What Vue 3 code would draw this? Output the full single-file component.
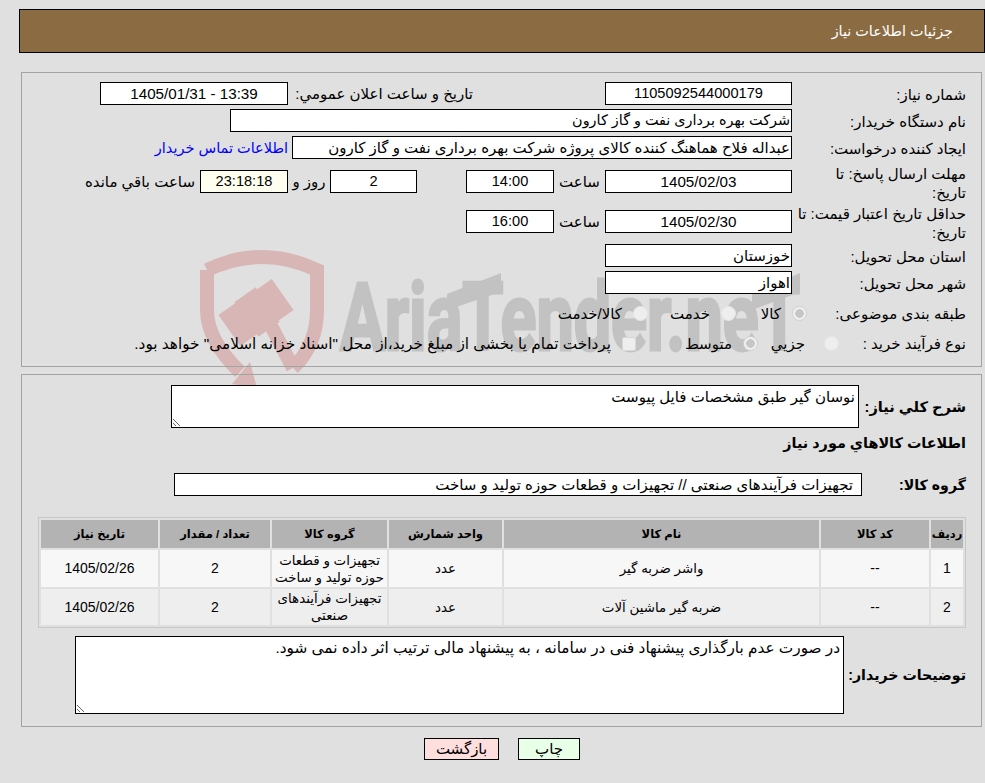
<script setup>
const rows = [
  { id: 1, code: '--', name: 'واشر ضربه گیر', unit: 'عدد', group: 'تجهیزات و قطعات حوزه تولید و ساخت', qty: '2', date: '1405/02/26' },
  { id: 2, code: '--', name: 'ضربه گیر ماشین آلات', unit: 'عدد', group: 'تجهیزات فرآیندهای صنعتی', qty: '2', date: '1405/02/26' }
]
const needDesc = 'نوسان گیر طبق مشخصات فایل پیوست'
const buyerDesc = 'در صورت عدم بارگذاری پیشنهاد فنی در سامانه ، به پیشنهاد مالی ترتیب اثر داده نمی شود.'
</script>

<template>
  <div class="page" dir="rtl">
    <svg class="mark" width="985" height="783" viewBox="0 0 985 783" aria-hidden="true">
      <g fill="none" stroke="#d8b6b6" stroke-width="14">
        <path d="M207 270 Q262 244 317 270 V310 Q317 345 293 368" />
        <path d="M207 270 V310 Q207 340 240 372" />
        <path d="M268 320 L293 368" />
      </g>
      <g fill="#d8b6b6">
        <rect x="-13" y="-19" width="26" height="38" transform="translate(240 323) rotate(-35)" />
        <rect x="-13" y="-21" width="26" height="42" transform="translate(257 312) rotate(-35)" />
        <rect x="-13" y="-19" width="26" height="38" transform="translate(272 302) rotate(-35)" />
        <polygon points="250,362 257,388 232,384" />
      </g>
      <text class="mark-text" x="340" y="350" textLength="460" lengthAdjust="spacingAndGlyphs">AriaTender.neT</text>
      <g fill="#c2c2c2">
        <polygon points="447,294 501,273 501,292 447,310" />
        <polygon points="752,294 800,273 800,292 752,310" />
      </g>
    </svg>

    <div class="content">
      <header class="head">جزئیات اطلاعات نیاز</header>

      <section class="panel panel-one">
        <div class="row">
          <label class="lab">شماره نیاز:</label>
          <div class="field w187 center">1105092544000179</div>
          <label class="lab2">تاریخ و ساعت اعلان عمومي:</label>
          <div class="field w188 center date">13:39 - 1405/01/31</div>
        </div>
        <div class="row r4">
          <label class="lab">نام دستگاه خریدار:</label>
          <div class="field w562">شرکت بهره برداری نفت و گاز کارون</div>
        </div>
        <div class="row r4">
          <label class="lab">ایجاد کننده درخواست:</label>
          <div class="field w500">عبداله فلاح هماهنگ کننده کالای پروژه شرکت بهره برداری نفت و گاز کارون</div>
          <a class="link">اطلاعات تماس خریدار</a>
        </div>
        <div class="row r11">
          <label class="lab">مهلت ارسال پاسخ: تا<br />تاریخ:</label>
          <div class="field w187 center date">1405/02/03</div>
          <span class="hour">ساعت</span>
          <div class="field w88 center">14:00</div>
          <div class="field w87 center ml-gap">2</div>
          <span class="day">روز و</span>
          <div class="field w88 center warm">23:18:18</div>
          <span class="left-text">ساعت باقي مانده</span>
        </div>
        <div class="row r17">
          <label class="lab">حداقل تاریخ اعتبار قیمت: تا<br />تاریخ:</label>
          <div class="field w187 center date">1405/02/30</div>
          <span class="hour">ساعت</span>
          <div class="field w88 center">16:00</div>
        </div>
        <div class="row r11">
          <label class="lab">استان محل تحویل:</label>
          <div class="field w187 tight">خوزستان</div>
        </div>
        <div class="row r4">
          <label class="lab">شهر محل تحویل:</label>
          <div class="field w187 tight">اهواز</div>
        </div>
        <div class="row r8">
          <label class="lab lab-cat">طبقه بندی موضوعی:</label>
          <div class="opt o1"><i class="radio on"></i><span>کالا</span></div>
          <div class="opt o2"><i class="radio"></i><span>خدمت</span></div>
          <div class="opt"><i class="radio"></i><span>کالا/خدمت</span></div>
        </div>
        <div class="row r7">
          <label class="lab lab-type">نوع فرآیند خرید :</label>
          <div class="opt o3"><i class="radio"></i><span class="gap19">جزيي</span></div>
          <div class="opt o4"><i class="radio on"></i><span>متوسط</span></div>
          <div class="opt"><i class="check"></i><span class="pay">پرداخت تمام یا بخشی از مبلغ خرید،از محل "اسناد خزانه اسلامی" خواهد بود.</span></div>
        </div>
      </section>

      <section class="panel panel-two">
        <div class="row h43">
          <label class="blab b107">شرح کلي نياز:</label>
          <textarea class="area a688" readonly :value="needDesc"></textarea>
        </div>
        <div class="heading">اطلاعات کالاهاي مورد نياز</div>
        <div class="row group-row">
          <label class="blab b104">گروه کالا:</label>
          <div class="field w688 group-field">تجهیزات فرآیندهای صنعتی // تجهیزات و قطعات حوزه تولید و ساخت</div>
        </div>

        <table class="grid">
          <colgroup>
            <col class="c1" /><col class="c2" /><col class="c3" /><col class="c4" /><col class="c5" /><col class="c6" /><col class="c7" />
          </colgroup>
          <thead>
            <tr>
              <th>ردیف</th><th>کد کالا</th><th>نام کالا</th><th>واحد شمارش</th><th>گروه کالا</th><th>تعداد / مقدار</th><th>تاریخ نیاز</th>
            </tr>
          </thead>
          <tbody>
            <tr v-for="r in rows" :key="r.id">
              <td class="num">{{ r.id }}</td>
              <td class="num">{{ r.code }}</td>
              <td>{{ r.name }}</td>
              <td>{{ r.unit }}</td>
              <td>{{ r.group }}</td>
              <td class="num">{{ r.qty }}</td>
              <td class="num">{{ r.date }}</td>
            </tr>
          </tbody>
        </table>

        <div class="row buyer">
          <label class="blab b122">توضیحات خریدار:</label>
          <textarea class="area a769" readonly :value="buyerDesc"></textarea>
        </div>
      </section>

      <div class="actions">
        <button class="btn print" type="button">چاپ</button>
        <button class="btn back" type="button">بازگشت</button>
      </div>
    </div>
  </div>
</template>

<style>
html, body { margin: 0; background: #e0e0e0; }
</style>

<style scoped>
.page {
  position: relative;
  width: 985px;
  height: 783px;
  overflow: hidden;
  background: #e0e0e0;
  color: #000;
  font-family: "Liberation Sans", "DejaVu Sans", sans-serif;
  font-size: 15px;
}
.mark { position: absolute; left: 0; top: 0; direction: ltr; }
.mark-text {
  direction: ltr;
  unicode-bidi: isolate;
  text-anchor: start;
  font-family: Roboto, "Liberation Sans", sans-serif;
  font-weight: 700;
  font-size: 94px;
  fill: #c2c2c2;
  stroke: #c2c2c2;
  stroke-width: 3px;
}
.content { position: relative; padding-top: 9px; }
.head {
  box-sizing: border-box;
  height: 44px;
  margin-left: 19px;
  padding-right: 31px;
  border: 1px solid #000;
  background: #8b6c42;
  color: #fff;
  font-size: 14.4px;
  line-height: 42px;
}
.panel {
  box-sizing: border-box;
  width: 961px;
  margin-right: 3px;
  border: 1px solid #a3a3a3;
}
.panel-one { margin-top: 19px; height: 295px; padding: 9px 15px 0 0; }
.panel-two { margin-top: 7px; height: 353px; padding: 10px 15px 0 0; }
.row { display: flex; align-items: center; height: 23px; }
.r4 { margin-top: 4px; }
.r7 { margin-top: 7px; }
.r8 { margin-top: 8px; }
.r11 { margin-top: 11px; }
.r17 { margin-top: 17px; }
.lab { flex: none; width: 174px; line-height: 19px; padding-top: 2px; white-space: nowrap; }
.lab-cat { width: 159px; padding-top: 0; }
.lab-type { width: 127px; padding-top: 0; }
.lab2 { flex: none; width: 185px; margin-right: 132px; white-space: nowrap; }
.field {
  flex: none;
  box-sizing: border-box;
  height: 23px;
  padding: 0 5px;
  border: 1px solid #000;
  background: #fff;
  line-height: 21px;
  white-space: nowrap;
  overflow: hidden;
}
.center { text-align: center; font-size: 14.6px; }
.date { font-size: 15.2px; }
.tight { padding-right: 1px; }
.warm { background: #fffff0; }
.w87 { width: 87px; }
.w88 { width: 88px; }
.w187 { width: 187px; }
.w188 { width: 188px; }
.w500 { width: 500px; padding-right: 1px; }
.w562 { width: 562px; padding-right: 1px; font-size: 14.4px; }
.w688 { width: 688px; }
.ml-gap { margin-right: 49px; }
.hour { flex: none; width: 51px; text-align: center; }
.day { flex: none; width: 42px; text-align: center; }
.left-text { flex: none; margin-right: 5px; white-space: nowrap; }
.link { flex: none; margin-right: 4px; color: #0000ff; font-size: 14.5px; white-space: nowrap; }
.opt { flex: none; display: flex; align-items: center; gap: 11px; white-space: nowrap; }
.o1 { width: 71px; }
.o2 { width: 88px; }
.o3 { width: 81px; }
.o4 { width: 122px; }
.gap19 { margin-right: 8px; }
.pay { font-size: 15.3px; }
.radio {
  flex: none;
  box-sizing: border-box;
  width: 15px;
  height: 15px;
  border-radius: 50%;
  background: #eeeeee;
  border: 1px solid #e6e6e6;
}
.radio.on { background: radial-gradient(circle, #c6c6c6 0 4px, #f0f0f0 4.6px); border-color: #d0d0d0; }
.check {
  flex: none;
  box-sizing: border-box;
  width: 14px;
  height: 14px;
  border-radius: 2px;
  background: #eeeeee;
  border: 1px solid #d8d8d8;
}
.blab { flex: none; font-size: 14.6px; font-weight: 700; white-space: nowrap; }
.b107 { width: 107px; }
.b104 { width: 104px; font-size: 14.2px; }
.b122 { width: 122px; font-size: 14.2px; }
.h43 { height: 43px; }
.area {
  flex: none;
  box-sizing: border-box;
  display: block;
  margin: 0;
  padding: 2px 3px;
  border: 1px solid #000;
  border-radius: 0;
  outline: none;
  background: #fff;
  color: #000;
  font: inherit;
  resize: both;
}
.a688 { width: 688px; height: 43px; }
.a769 { width: 769px; height: 78px; font-size: 15.3px; }
.heading { height: 20px; margin-top: 5px; font-size: 14.4px; font-weight: 700; line-height: 20px; }
.group-row { margin-top: 20px; }
.group-field { padding-right: 8px; }
.grid {
  width: 928px;
  margin-top: 21px;
  border: 1px solid #c8c8c8;
  border-spacing: 2px;
  border-collapse: separate;
  table-layout: fixed;
}
.c1 { width: 32px; }
.c2 { width: 108px; }
.c3 { width: 315px; }
.c4 { width: 113px; }
.c5 { width: 115px; }
.c6 { width: 110px; }
.c7 { width: 117px; }
.grid th {
  height: 28px;
  padding: 0;
  background: #b3b3b3;
  font-size: 11.5px;
  font-weight: 700;
}
.grid td {
  padding: 0;
  font-size: 13.4px;
  text-align: center;
  line-height: 17px;
}
.grid td.num { font-size: 14px; }
.grid tbody tr:nth-child(1) td { height: 37px; background: #f7f7f7; }
.grid tbody tr:nth-child(2) td { height: 36px; background: #eeeeee; }
.buyer { height: 78px; margin-top: 8px; }
.actions { display: flex; gap: 19px; margin-top: 11px; padding-right: 405px; }
.btn {
  box-sizing: border-box;
  height: 22px;
  padding: 0;
  border: 1px solid #000;
  border-radius: 0;
  color: #000;
  font: inherit;
  line-height: 20px;
}
.print { width: 62px; background: #e8ffe8; }
.back { width: 75px; background: #ffdede; }
</style>
